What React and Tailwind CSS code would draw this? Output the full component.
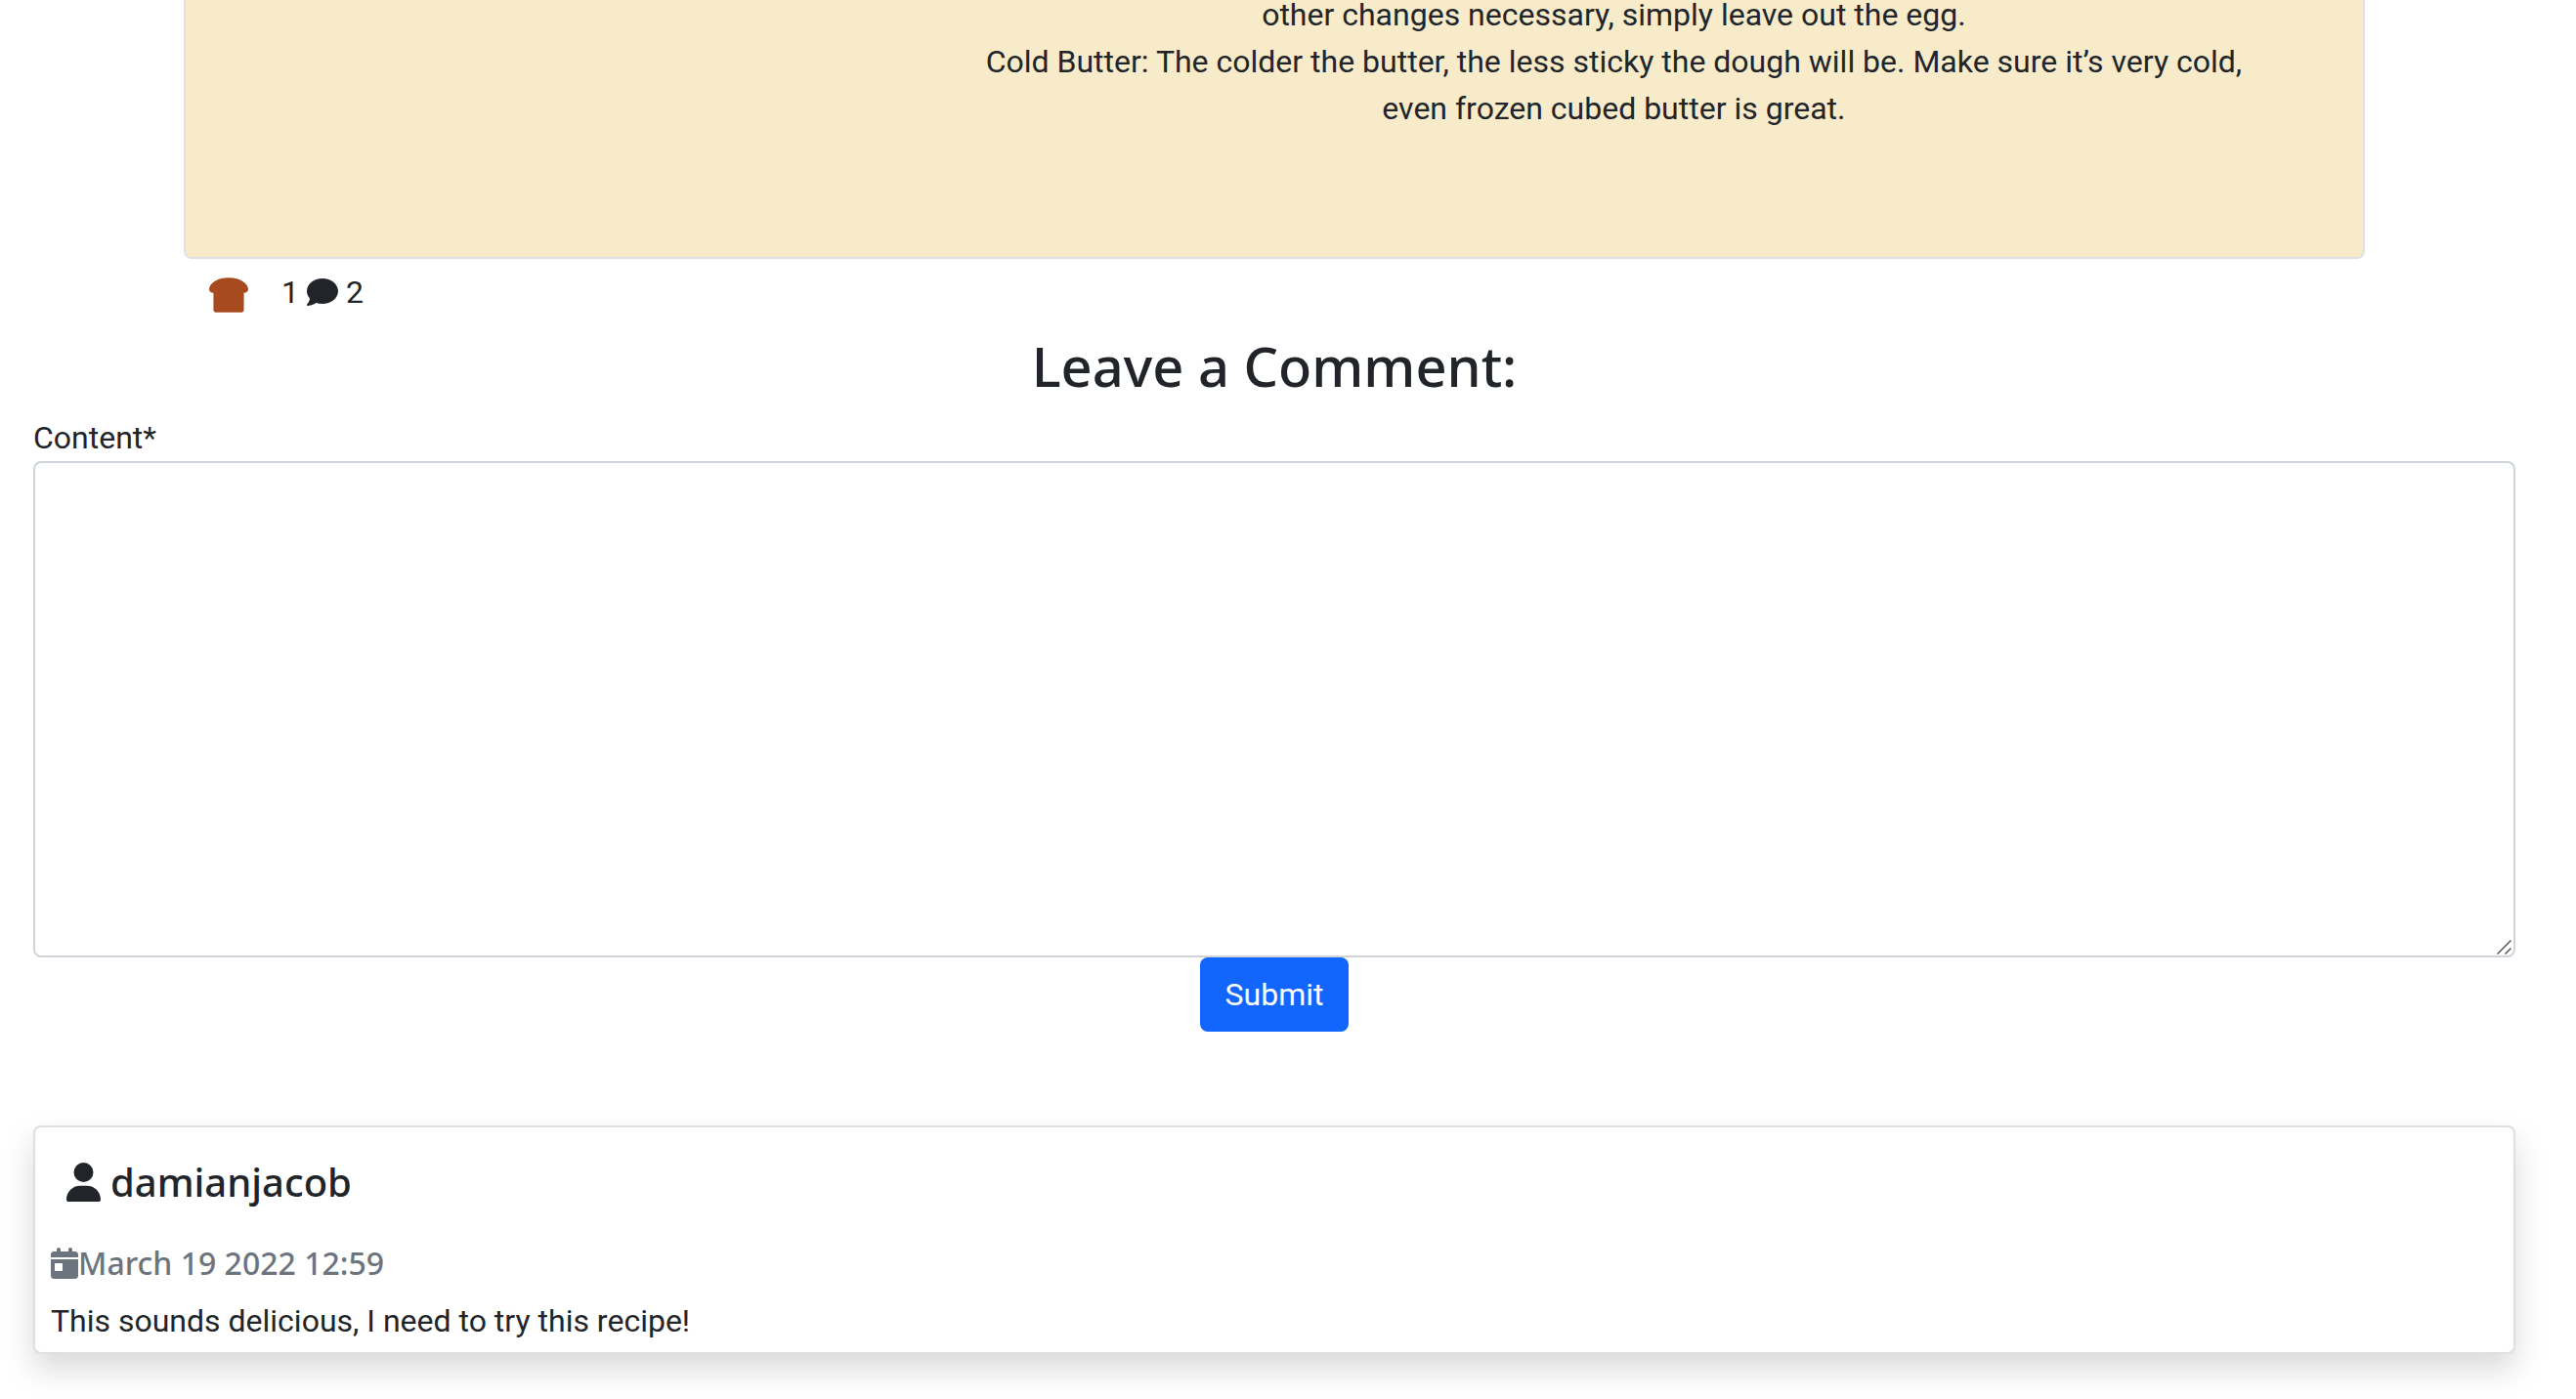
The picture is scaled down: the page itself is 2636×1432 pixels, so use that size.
import { FaBreadSlice } from "react-icons/fa";
import { FaCalendarDay, FaComment, FaUser } from "react-icons/fa6";

const heading = "font-['Noto_Sans',sans-serif] font-medium";

function RecipeCard() {
  return (
    <section className="mx-[154px] h-[265px] overflow-hidden rounded-b-lg border-2 border-t-0 border-[#dee2e6] bg-[#f7ebca]">
      <div className="-mt-[9px] ml-[35%] mr-[85px] text-center">
        <p>
          other changes necessary, simply leave out the egg.
          <br />
          Cold Butter: The colder the butter, the less sticky the dough will be. Make sure it’s very cold,
          <br />
          even frozen cubed butter is great.
        </p>
      </div>
    </section>
  );
}

function Reactions({ likes, comments }) {
  return (
    <div className="mx-[154px] flex h-[76px] items-center gap-2 pb-2">
      <button type="button" aria-label="Like" className="px-[26px] pt-[6px] text-[#a84a1f]">
        <FaBreadSlice className="h-9 w-10" />
      </button>
      <span>{likes}</span>
      <FaComment className="size-8" />
      <span>{comments}</span>
    </div>
  );
}

function CommentForm() {
  return (
    <form className="flex flex-col">
      <h2 className={`${heading} mb-4 text-center text-[56px] leading-[67px]`}>Leave a Comment:</h2>
      <label htmlFor="content">Content*</label>
      <div className="relative flex">
        <textarea
          id="content"
          rows={10}
          className="box-content block flex-1 resize-y rounded-lg border-2 border-[#ced4da] bg-white px-6 py-3 outline-none [&::-webkit-resizer]:hidden"
        />
        <svg
          viewBox="0 0 15 15"
          aria-hidden="true"
          className="pointer-events-none absolute bottom-[3px] right-1 size-[15px] text-[#555]"
          fill="none"
          stroke="currentColor"
          strokeWidth="1.5"
        >
          <path d="M0.5 14.5 14.5 0.5M8.5 14.5 14.5 8.5" />
        </svg>
      </div>
      <button type="submit" className="self-center rounded-lg bg-[#1266fe] px-[26px] py-[14px] text-white">
        Submit
      </button>
    </form>
  );
}

function Comment({ author, date, children }) {
  return (
    <article className="mt-24 rounded-lg border-2 border-[#dfdfdf] bg-white px-4 pb-2 pt-8 shadow-[0_16px_32px_rgba(0,0,0,0.15)]">
      <h5 className={`${heading} mb-10 flex items-center gap-[10px] px-4 text-[40px] leading-[48px]`}>
        <FaUser className="h-10 w-[35px]" />
        {author}
      </h5>
      <h6 className={`${heading} mb-4 flex items-center leading-[38px] text-[#6c757d]`}>
        <FaCalendarDay className="h-8 w-7" />
        {date}
      </h6>
      <p>{children}</p>
    </article>
  );
}

export default function App() {
  return (
    <main className="bg-white pl-[34px] pr-[62px] pb-[46px] font-[Roboto,sans-serif] text-[32px] leading-[48px] text-[#212529]">
      <RecipeCard />
      <Reactions likes={1} comments={2} />
      <CommentForm />
      <Comment author="damianjacob" date="March 19 2022 12:59">
        This sounds delicious, I need to try this recipe!
      </Comment>
    </main>
  );
}
